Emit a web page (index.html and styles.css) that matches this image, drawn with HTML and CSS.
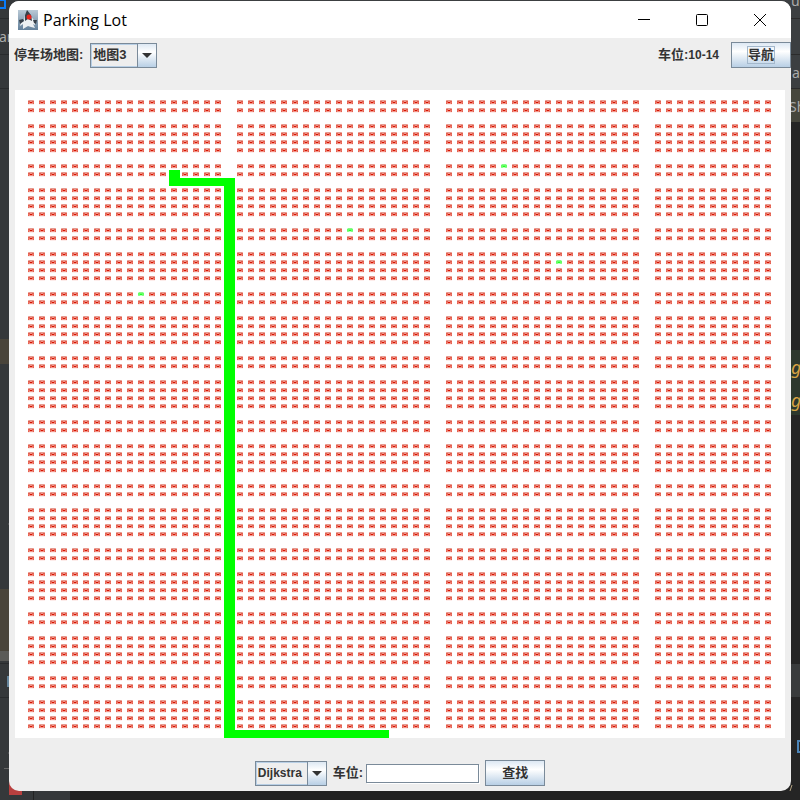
FILE: index.html
```
<!DOCTYPE html>
<html lang="zh-CN">
<head>
<meta charset="utf-8">
<title>Parking Lot</title>
<link rel="stylesheet" href="styles.css">
</head>
<body>
<div class="desktop" aria-hidden="true">
  <svg class="left-edge" width="70" height="800" viewBox="0 0 70 800">
    <rect width="70" height="800" fill="#35383a"/>
    <path d="M0 0h5V8H0" fill="none" stroke="#087cfa" stroke-width="2"/>
    <path d="M0 18.500h40M0 54.500h40M0 88.500h40M0 697.500h40" stroke="#292b2d"/>
    <text x="-1" y="42" class="edge-label">ar</text>
    <rect y="339" width="40" height="25" fill="#49443a"/>
    <rect y="589" width="40" height="62" fill="#49443a"/>
    <rect y="651" width="40" height="10" fill="#5b5b58"/>
    <path d="M0 663.500h9" stroke="#292b2d"/>
    <rect x="7" y="676" width="2" height="11" fill="#65849a"/>
    <rect x="9" y="780" width="13" height="15" fill="#b8403f"/>
    <path d="M33.500 790v10" stroke="#222"/>
    <path d="M4 768.500h5M8 524h1M8 753h1" stroke="#666"/>
  </svg>
  <svg class="right-edge" width="40" height="800" viewBox="0 0 40 800">
    <rect width="40" height="800" fill="#252525"/>
    <rect width="40" height="88" fill="#3c3f41"/>
    <rect y="88" width="40" height="34" fill="#46463c"/>
    <path d="M0 18.500h40M0 54.500h40M0 88.500h40" stroke="#2b2b2b"/>
    <text x="32" y="78" class="edge-label">a</text>
    <text x="29" y="112" class="edge-label">Sh</text>
    <text x="31" y="6" class="edge-label">u</text>
    <rect y="350" width="40" height="65" fill="#2d382d"/>
    <text x="31" y="374" class="edge-code">g</text>
    <text x="31" y="407" class="edge-code">g</text>
    <rect y="664" width="40" height="33" fill="#393b3c"/>
    <path d="M40 741h-2v11h2" fill="none" stroke="#4b84b8" stroke-width="2"/>
    <path d="M32 785l-2 6" stroke="#b0a080"/>
  </svg>
</div>
<main class="window">
  <header class="titlebar">
    <svg class="app-icon" viewBox="0 0 20 20">
      <defs><linearGradient id="tile" x2="0" y2="1"><stop stop-color="#b9c9d6"/><stop offset="1" stop-color="#64819b"/></linearGradient></defs>
      <rect width="20" height="20" fill="url(#tile)"/>
      <path d="M7 5 9 1 12 5 15 9 17 12 17 15 15 14 17 18 13 17 10 16 5 19 5 14 2 16 3 12 6 11Z" fill="#eef1f3"/>
      <path d="M9 0 13 5 14 11 10 9 7 11 7 5ZM1 10 5 9 6 11 2 14ZM15 10 19 10 18 14 16 13Z" fill="#37404a"/>
      <circle cx="11" cy="7" r="2.500" fill="#e8231c"/>
    </svg>
    <h1 class="title">Parking Lot</h1>
    <div class="window-actions">
      <button class="window-button" aria-label="Minimize"><svg viewBox="0 0 14 14"><path d="M1 6.500h12"/></svg></button>
      <button class="window-button" aria-label="Maximize"><svg viewBox="0 0 14 14"><rect x="1.500" y="1.500" width="11" height="11" rx="1"/></svg></button>
      <button class="window-button" aria-label="Close"><svg viewBox="0 0 14 14"><path d="M1 1l12 12M13 1 1 13"/></svg></button>
    </div>
  </header>
  <div class="toolbar">
    <label for="map-choice">停车场地图:</label>
    <span class="combo"><select id="map-choice" class="map-select"><option>地图3</option></select><span class="combo-arrow"></span></span>
    <span class="spot">车位:<span class="latin">10-14</span></span>
    <button class="button navigate"><span class="focus-ring">导航</span></button>
  </div>
  <svg id="lot" class="lot" viewBox="0 0 770 648" shape-rendering="crispEdges" role="img" aria-label="停车场地图">
    <defs>
      <g id="car">
        <path d="M2 2h6v1H2z" fill="#f0aaa1"/>
        <path d="M3 2h4v1H3z" fill="#e59a90"/>
        <path d="M2 3h6v1H2z" fill="#e2604f"/>
        <path d="M4 3h2v1H4z" fill="#f0958a"/>
        <path d="M2 4h6v1H2z" fill="#ec6f60"/>
        <path d="M4 4h2v1H4z" fill="#d51300"/>
        <path d="M2 5h6v1H2z" fill="#e2604f"/>
        <path d="M3 5h4v1H3z" fill="#f0958a"/>
        <path d="M2 6h6v1H2z" fill="#fdecea"/>
      </g>
      <g id="free">
        <path d="M2 2h6v1H2z" fill="#c8ffc8"/>
        <path d="M3 2h4v1H3z" fill="#88f888"/>
        <path d="M2 3h6v2H2z" fill="#66ff66"/>
        <path d="M4 4h2v1H4z" fill="#20ff20"/>
        <path d="M2 5h6v1H2z" fill="#88ff88"/>
        <path d="M4 5h2v1H4z" fill="#b8ffb8"/>
      </g>
    </defs>
  </svg>
  <footer class="search">
    <span class="combo"><select class="algorithm-select" aria-label="算法"><option>Dijkstra</option></select><span class="combo-arrow"></span></span>
    <label for="spot-input">车位:</label>
    <input id="spot-input" class="spot-input" type="text">
    <button class="button find">查找</button>
  </footer>
</main>
<script src="lot.js"></script>
</body>
</html>
```
FILE: styles.css
```
* { box-sizing: border-box; }
body {
  margin: 0;
  min-height: 100vh;
  padding: 1px 9px 9px;
  color: #333;
  font: bold 13px/16px "Liberation Sans", "Noto Sans CJK SC", sans-serif;
}
.desktop { position: absolute; inset: 0; z-index: -1; overflow: hidden; background: linear-gradient(#3c3f41 20px, #202020 20px); }
.left-edge { position: absolute; left: 0; top: 0; }
.right-edge { position: absolute; right: 0; top: 0; }
.edge-label { fill: #aaa; font: 14px "Noto Sans", sans-serif; }
.edge-code { fill: #d6a343; font: italic 18px "Noto Sans", sans-serif; }
.window { min-height: calc(100vh - 10px); background: #eee; border-radius: 10px; overflow: hidden; }
.titlebar { display: flex; align-items: center; height: 37px; padding: 0 2px 0 9px; background: #fff; }
.app-icon { width: 20px; height: 20px; }
.title { margin: 0 0 0 5px; color: #000; font: 16px/20px "Open Sans", "Noto Sans", sans-serif; }
.window-actions { display: flex; margin-left: auto; }
.window-button { display: grid; place-items: center; width: 58px; height: 37px; padding: 0; border: 0; background: none; }
.window-button svg { width: 14px; height: 14px; fill: none; stroke: #000; stroke-width: 1; }
.toolbar { display: flex; align-items: center; height: 34px; padding-left: 5px; }
.combo { position: relative; display: inline-flex; }
select {
  appearance: none;
  height: 25px;
  padding: 0 20px 0 2px;
  border: 1px solid #7a8a99;
  border-radius: 0;
  background: #eee;
  box-shadow: inset 0 0 0 1px #b8cfe5;
  color: #333;
  font: inherit;
}
.map-select { width: 67px; margin-left: 7px; }
.algorithm-select { width: 72px; font-size: 12px; }
.latin { font-size: 12px; }
.combo-arrow {
  position: absolute;
  top: 0;
  right: 0;
  width: 20px;
  height: 25px;
  border: 1px solid #7a8a99;
  background: linear-gradient(#dde8f3, #fff 35%, #b8cfe5);
  pointer-events: none;
}
.combo-arrow::after { content: ""; position: absolute; left: 4px; top: 9px; border: 5px solid transparent; border-top-color: #333; border-bottom: 0; }
.spot { margin-left: auto; }
.button {
  height: 26px;
  padding: 0;
  border: 1px solid #7a8a99;
  background: linear-gradient(#dde8f3, #fff 35%, #b8cfe5);
  color: #333;
  font: inherit;
}
.navigate { width: 60px; margin-left: 12px; }
.focus-ring { display: inline-block; border: 1px solid #a3b8cc; }
.lot { display: block; width: calc(100% - 12px); margin: 18px 6px 0; background: #fff; }
.search { display: flex; align-items: center; justify-content: center; gap: 6px; padding-top: 22px; }
.spot-input { width: 113px; height: 19px; margin-left: -3px; border: 1px solid #7a8a99; box-shadow: 1px 1px #fff; background: #fff; font: inherit; }
.find { width: 60px; }
```
FILE: lot.js
```
const CELL_W = 11;
const CELL_H = 8;
const COLS = 70;
const ROWS = 81;
const NS = "http://www.w3.org/2000/svg";
const lot = document.getElementById("lot");
const free = new Set(["9-44", "17-30", "21-49", "25-11"]);

function isRoad(row, col) {
  return row % 8 === 0 || row % 8 === 3 || col % 19 === 0 || col === COLS - 1;
}

for (let row = 0; row < ROWS; row++) {
  for (let col = 0; col < COLS; col++) {
    if (isRoad(row, col)) continue;
    const space = document.createElementNS(NS, "use");
    space.setAttribute("href", free.has(row + "-" + col) ? "#free" : "#car");
    space.setAttribute("x", col * CELL_W);
    space.setAttribute("y", row * CELL_H);
    lot.append(space);
  }
}

// Route segments: row, column, rows high, columns wide
[[10, 14, 1, 1], [11, 14, 1, 6], [11, 19, 70, 1], [80, 19, 1, 15]].forEach(([row, col, high, wide]) => {
  const leg = document.createElementNS(NS, "rect");
  leg.setAttribute("x", col * CELL_W);
  leg.setAttribute("y", row * CELL_H);
  leg.setAttribute("width", wide * CELL_W);
  leg.setAttribute("height", high * CELL_H);
  leg.setAttribute("fill", "#0f0");
  lot.append(leg);
});
```
